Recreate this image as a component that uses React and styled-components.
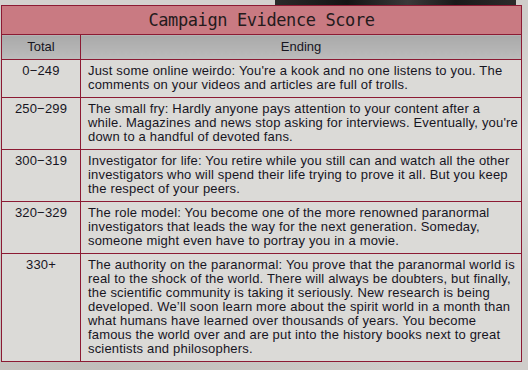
import React from 'react'
import styled, { createGlobalStyle } from 'styled-components'

const GlobalStyle = createGlobalStyle`
  html, body {
    margin: 0;
    padding: 0;
  }
  body {
    width: 528px;
    height: 370px;
    overflow: hidden;
    background: #cfcdca;
    background-image:
      radial-gradient(ellipse at 95% 40%, rgba(255,255,255,0.35), transparent 40%),
      radial-gradient(ellipse at 20% 100%, rgba(150,145,140,0.25), transparent 50%);
  }
`

const Page = styled.div`
  width: 528px;
  height: 370px;
  font-family: "Liberation Sans", Arial, sans-serif;
  color: #17151f;
`

const TopStrip = styled.div`
  display: flex;
  height: 5px;
`

const PaperBit = styled.div`
  width: 275px;
  background: #d3d1ce;
`

const PhotoBit = styled.div`
  width: 241px;
  background: linear-gradient(90deg, #2a2a2a, #141414 30%, #3a3a3a 55%, #1a1a1a 75%, #2c2c2c);
`

const Table = styled.table`
  margin-left: 1px;
  width: 521px;
  border-collapse: collapse;
  border: 1px solid #8c1a33;
  table-layout: fixed;

  td, th {
    border: 1px solid #8c1a33;
  }
`

const Col = styled.col`
  width: ${p => p.$w || 'auto'};
`

const TitleCell = styled.th`
  height: 28px;
  padding: 0;
  background: #c97a82;
  font-family: "DejaVu Sans Mono", "Liberation Mono", monospace;
  font-size: 17px;
  font-weight: normal;
  letter-spacing: -0.4px;
  color: #241a1c;
  text-align: center;
  line-height: 28px;
`

const HeadCell = styled.th`
  height: 24px;
  padding: 0;
  background: linear-gradient(180deg, #a9a9a9, #b4b4b4 60%, #bdbdbd);
  font-size: 13px;
  font-weight: normal;
  text-align: center;
  line-height: 24px;
`

const Cell = styled.td`
  padding: 4px 0 5px ${p => (p.$score ? '0' : '7px')};
  vertical-align: top;
  text-align: ${p => (p.$score ? 'center' : 'left')};
  background: #dbdad7;
  font-size: 13px;
  line-height: 14px;
  letter-spacing: 0.18px;
  white-space: nowrap;
  overflow: hidden;
`

const rows = [
  {
    score: '0−249',
    lines: [
      "Just some online weirdo: You're a kook and no one listens to you. The",
      'comments on your videos and articles are full of trolls.',
    ],
  },
  {
    score: '250−299',
    lines: [
      'The small fry: Hardly anyone pays attention to your content after a',
      "while. Magazines and news stop asking for interviews. Eventually, you're",
      'down to a handful of devoted fans.',
    ],
  },
  {
    score: '300−319',
    lines: [
      'Investigator for life: You retire while you still can and watch all the other',
      'investigators who will spend their life trying to prove it all. But you keep',
      'the respect of your peers.',
    ],
  },
  {
    score: '320−329',
    lines: [
      'The role model: You become one of the more renowned paranormal',
      'investigators that leads the way for the next generation. Someday,',
      'someone might even have to portray you in a movie.',
    ],
  },
  {
    score: '330+',
    lines: [
      'The authority on the paranormal: You prove that the paranormal world is',
      'real to the shock of the world. There will always be doubters, but finally,',
      'the scientific community is taking it seriously. New research is being',
      'developed. We’ll soon learn more about the spirit world in a month than',
      'what humans have learned over thousands of years. You become',
      'famous the world over and are put into the history books next to great',
      'scientists and philosophers.',
    ],
  },
]

function App() {
  return (
    <Page>
      <GlobalStyle />
      <TopStrip>
        <PaperBit />
        <PhotoBit />
      </TopStrip>
      <Table>
        <colgroup>
          <Col $w="79px" />
          <Col />
        </colgroup>
        <thead>
          <tr>
            <TitleCell colSpan={2}>Campaign Evidence Score</TitleCell>
          </tr>
          <tr>
            <HeadCell>Total</HeadCell>
            <HeadCell>Ending</HeadCell>
          </tr>
        </thead>
        <tbody>
          {rows.map(r => (
            <tr key={r.score}>
              <Cell $score>{r.score}</Cell>
              <Cell>
                {r.lines.map((l, i) => (
                  <React.Fragment key={i}>
                    {i > 0 && <br />}
                    {l}
                  </React.Fragment>
                ))}
              </Cell>
            </tr>
          ))}
        </tbody>
      </Table>
    </Page>
  )
}

export default App
